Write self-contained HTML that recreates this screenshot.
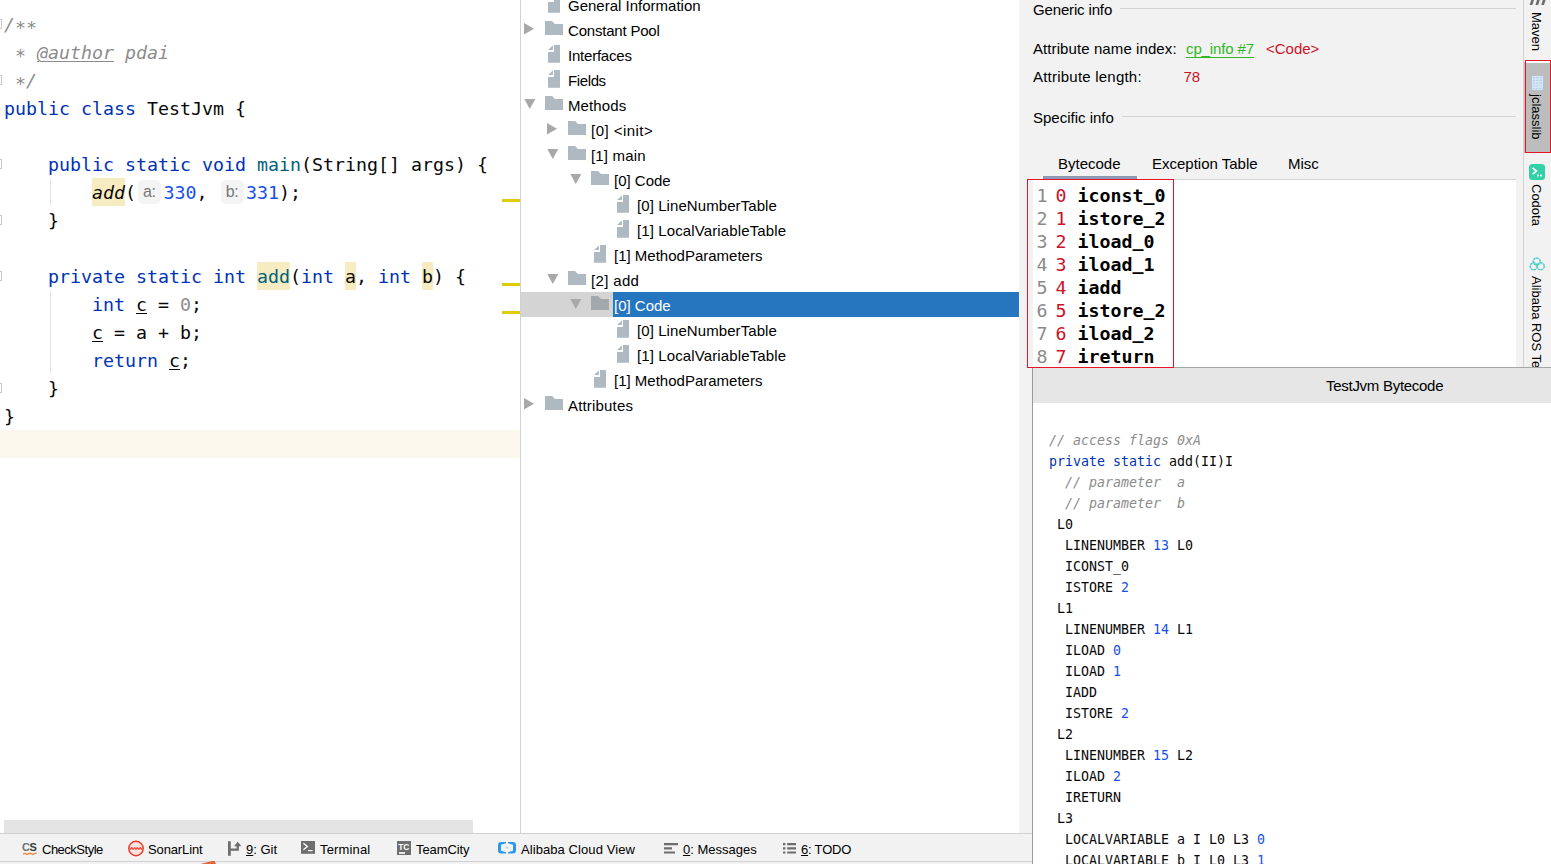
<!DOCTYPE html>
<html><head><meta charset="utf-8"><title>TestJvm</title>
<style>
*{box-sizing:border-box;margin:0;padding:0}
html,body{width:1551px;height:864px;overflow:hidden;background:#fff}
body{position:relative;font-family:"Liberation Sans",sans-serif;color:#000}
.abs{position:absolute}
/* editor */
#ed{position:absolute;left:0;top:0;width:520px;height:834px;background:#fff;overflow:hidden}
.ln{position:absolute;left:0;height:28px;line-height:30px;white-space:pre;font-family:"DejaVu Sans Mono","Liberation Mono",monospace;font-size:18.27px;color:#080808}
.k{color:#0033b3}.c{color:#8c8c8c;font-style:italic}.n{color:#1750eb}.m{color:#00627a}
.hl{background:#f7ebc1;display:inline-block;vertical-align:top;height:28px}
.hint{display:inline-block;vertical-align:top;height:24px;line-height:24px;background:#f4f4f4;border-radius:5px;color:#787878;font-family:"Liberation Sans",sans-serif;font-size:16px;letter-spacing:-0.4px;text-align:center;font-style:normal}
.u{text-decoration:underline;text-decoration-thickness:1px;text-underline-offset:2px}
.ym{position:absolute;left:502px;width:18px;height:3px;background:#e0cc00}
.guide{position:absolute;left:50px;width:1px;background:#e3e3e3}
.fold{position:absolute;left:-8px;width:10px;height:10px;border:1px solid #c9c9c9;background:#fff}
.as{position:relative;top:3px}
/* tree */
#tree{position:absolute;left:520px;top:0;width:499px;height:834px;background:#fff;border-left:1px solid #d1d1d1;overflow:hidden}
.row{position:absolute;left:0;height:25px;line-height:25px;font-size:15px;white-space:pre;width:100%}
.row span{position:absolute;top:1px}
.row svg{position:absolute}
/* right */
#right{position:absolute;left:1020px;top:0;width:504px;box-shadow:-1px 0 0 #f2f2f2;height:864px;background:#f2f2f2}
.t15{position:absolute;font-size:15px;line-height:20px;white-space:pre}
.bc{position:absolute;left:0;height:23px;line-height:23px;font-family:"DejaVu Sans Mono","Liberation Mono",monospace;font-size:18.27px;white-space:pre}
/* popup */
#pop{position:absolute;left:1032px;top:367px;width:519px;height:497px;background:#fff;border-left:1px solid #999;border-top:1px solid #a6a6a6}
.pl{position:absolute;left:0;height:21px;line-height:21px;font-family:"DejaVu Sans Mono","Liberation Mono",monospace;font-size:13.29px;white-space:pre;color:#080808}
/* stripe */
#stripe{position:absolute;left:1523px;top:0;width:28px;height:367px;background:#f2f2f2;border-left:1px solid #d1d1d1}
.vt{position:absolute;writing-mode:vertical-rl;font-size:13px;line-height:16px;white-space:pre}
/* bottom */
#bot{position:absolute;left:0;top:833px;width:1032px;height:31px;background:#f2f2f2;border-top:1px solid #d1d1d1}
.bt{position:absolute;top:7px;font-size:13px;line-height:18px;white-space:pre}
</style></head><body>


<div id="ed">
<div class="ln c" style="top:10px;left:4px">/<span class="as">**</span></div>
<div class="ln c" style="top:38px;left:4px"> <span class="as">*</span> <span class="u">@author</span> pdai</div>
<div class="ln c" style="top:66px;left:4px"> <span class="as">*</span>/</div>
<div class="ln" style="top:94px;left:4px"><span class="k">public class</span> TestJvm {</div>
<div class="ln" style="top:150px;left:48px"><span class="k">public static void</span> <span class="m">main</span>(String[] args) {</div>
<div class="ln" style="top:178px;left:92px"><span class="hl"><i>add</i></span>(<span class="hint" style="width:22.5px;margin:2px 3px 0 2px">a:</span><span class="n">330</span>, <span class="hint" style="width:23px;margin:2px 2.6px 0 2px">b:</span><span class="n">331</span>);</div>
<div class="ln" style="top:206px;left:48px">}</div>
<div class="ln" style="top:262px;left:48px"><span class="k">private static int</span> <span class="m hl">add</span>(<span class="k">int</span> <span class="hl">a</span>, <span class="k">int</span> <span class="hl">b</span>) {</div>
<div class="ln" style="top:290px;left:92px"><span class="k">int</span> <span class="u">c</span> = <span style="color:#8c8c8c">0</span>;</div>
<div class="ln" style="top:318px;left:92px"><span class="u">c</span> = a + b;</div>
<div class="ln" style="top:346px;left:92px"><span class="k">return</span> <span class="u">c</span>;</div>
<div class="ln" style="top:374px;left:48px">}</div>
<div class="ln" style="top:402px;left:4px">}</div>
<div class="abs" style="left:0;top:430px;width:520px;height:28px;background:#fcf8ee"></div>
<div class="guide" style="top:178px;height:28px"></div>
<div class="guide" style="top:290px;height:84px"></div>
<div class="ym" style="top:199px"></div><div class="ym" style="top:283px"></div><div class="ym" style="top:311px"></div>
<div class="fold" style="top:19px"></div><div class="fold" style="top:75px"></div><div class="fold" style="top:159px"></div><div class="fold" style="top:215px"></div><div class="fold" style="top:271px"></div><div class="fold" style="top:383px"></div>
<div class="abs" style="left:4px;top:820px;width:469px;height:13px;background:#e4e4e4"></div>
</div>


<div id="tree">
<div class="row" style="top:-8px"><svg style="left:27px;top:3px" width="12" height="18" viewBox="0 0 12 18"><path d="M6 0H12V17.7H0V7H6Z" fill="#aeb9c2"/><path d="M4.9 0.2V4.9H0.2Z" fill="#aeb9c2"/></svg><span style="left:47px">General Information</span></div>
<div class="row" style="top:17px"><svg style="left:3px;top:6px" width="10" height="12" viewBox="0 0 10 12"><path d="M0 0L10 5.8L0 11.6Z" fill="#a8a8a8"/></svg><svg style="left:24px;top:4px" width="18" height="14" viewBox="0 0 18 14"><path d="M0 0H7L10 3H18V14H0Z" fill="#aeb9c2"/></svg><span style="left:47px;letter-spacing:-0.2px">Constant Pool</span></div>
<div class="row" style="top:42px"><svg style="left:27px;top:3px" width="12" height="18" viewBox="0 0 12 18"><path d="M6 0H12V17.7H0V7H6Z" fill="#aeb9c2"/><path d="M4.9 0.2V4.9H0.2Z" fill="#aeb9c2"/></svg><span style="left:47px;letter-spacing:-0.22px">Interfaces</span></div>
<div class="row" style="top:67px"><svg style="left:27px;top:3px" width="12" height="18" viewBox="0 0 12 18"><path d="M6 0H12V17.7H0V7H6Z" fill="#aeb9c2"/><path d="M4.9 0.2V4.9H0.2Z" fill="#aeb9c2"/></svg><span style="left:47px;letter-spacing:-0.38px">Fields</span></div>
<div class="row" style="top:92px"><svg style="left:3px;top:7px" width="12" height="10" viewBox="0 0 12 10"><path d="M0.3 0H11.3L5.8 10Z" fill="#a8a8a8"/></svg><svg style="left:24px;top:4px" width="18" height="14" viewBox="0 0 18 14"><path d="M0 0H7L10 3H18V14H0Z" fill="#aeb9c2"/></svg><span style="left:47px;letter-spacing:0.1px">Methods</span></div>
<div class="row" style="top:117px"><svg style="left:26px;top:6px" width="10" height="12" viewBox="0 0 10 12"><path d="M0 0L10 5.8L0 11.6Z" fill="#a8a8a8"/></svg><svg style="left:47px;top:4px" width="18" height="14" viewBox="0 0 18 14"><path d="M0 0H7L10 3H18V14H0Z" fill="#aeb9c2"/></svg><span style="left:70px;letter-spacing:0.46px">[0] &lt;init&gt;</span></div>
<div class="row" style="top:142px"><svg style="left:26px;top:7px" width="12" height="10" viewBox="0 0 12 10"><path d="M0.3 0H11.3L5.8 10Z" fill="#a8a8a8"/></svg><svg style="left:47px;top:4px" width="18" height="14" viewBox="0 0 18 14"><path d="M0 0H7L10 3H18V14H0Z" fill="#aeb9c2"/></svg><span style="left:70px;letter-spacing:0.17px">[1] main</span></div>
<div class="row" style="top:167px"><svg style="left:49px;top:7px" width="12" height="10" viewBox="0 0 12 10"><path d="M0.3 0H11.3L5.8 10Z" fill="#a8a8a8"/></svg><svg style="left:70px;top:4px" width="18" height="14" viewBox="0 0 18 14"><path d="M0 0H7L10 3H18V14H0Z" fill="#aeb9c2"/></svg><span style="left:93px">[0] Code</span></div>
<div class="row" style="top:192px"><svg style="left:96px;top:3px" width="12" height="18" viewBox="0 0 12 18"><path d="M6 0H12V17.7H0V7H6Z" fill="#aeb9c2"/><path d="M4.9 0.2V4.9H0.2Z" fill="#aeb9c2"/></svg><span style="left:116px;letter-spacing:0.08px">[0] LineNumberTable</span></div>
<div class="row" style="top:217px"><svg style="left:96px;top:3px" width="12" height="18" viewBox="0 0 12 18"><path d="M6 0H12V17.7H0V7H6Z" fill="#aeb9c2"/><path d="M4.9 0.2V4.9H0.2Z" fill="#aeb9c2"/></svg><span style="left:116px;letter-spacing:0.12px">[1] LocalVariableTable</span></div>
<div class="row" style="top:242px"><svg style="left:73px;top:3px" width="12" height="18" viewBox="0 0 12 18"><path d="M6 0H12V17.7H0V7H6Z" fill="#aeb9c2"/><path d="M4.9 0.2V4.9H0.2Z" fill="#aeb9c2"/></svg><span style="left:93px">[1] MethodParameters</span></div>
<div class="row" style="top:267px"><svg style="left:26px;top:7px" width="12" height="10" viewBox="0 0 12 10"><path d="M0.3 0H11.3L5.8 10Z" fill="#a8a8a8"/></svg><svg style="left:47px;top:4px" width="18" height="14" viewBox="0 0 18 14"><path d="M0 0H7L10 3H18V14H0Z" fill="#aeb9c2"/></svg><span style="left:70px;letter-spacing:0.34px">[2] add</span></div>
<div class="row" style="top:292px"><div class="abs" style="left:0;top:0;width:92px;height:25px;background:#d4d4d4"></div><div class="abs" style="left:92px;top:0;width:406px;height:25px;background:#2675bf"></div><svg style="left:49px;top:7px" width="12" height="10" viewBox="0 0 12 10"><path d="M0.3 0H11.3L5.8 10Z" fill="#a8a8a8"/></svg><svg style="left:70px;top:4px" width="18" height="14" viewBox="0 0 18 14"><path d="M0 0H7L10 3H18V14H0Z" fill="#a3a8ac"/></svg><span style="left:93px;color:#fff">[0] Code</span></div>
<div class="row" style="top:317px"><svg style="left:96px;top:3px" width="12" height="18" viewBox="0 0 12 18"><path d="M6 0H12V17.7H0V7H6Z" fill="#aeb9c2"/><path d="M4.9 0.2V4.9H0.2Z" fill="#aeb9c2"/></svg><span style="left:116px;letter-spacing:0.08px">[0] LineNumberTable</span></div>
<div class="row" style="top:342px"><svg style="left:96px;top:3px" width="12" height="18" viewBox="0 0 12 18"><path d="M6 0H12V17.7H0V7H6Z" fill="#aeb9c2"/><path d="M4.9 0.2V4.9H0.2Z" fill="#aeb9c2"/></svg><span style="left:116px;letter-spacing:0.12px">[1] LocalVariableTable</span></div>
<div class="row" style="top:367px"><svg style="left:73px;top:3px" width="12" height="18" viewBox="0 0 12 18"><path d="M6 0H12V17.7H0V7H6Z" fill="#aeb9c2"/><path d="M4.9 0.2V4.9H0.2Z" fill="#aeb9c2"/></svg><span style="left:93px">[1] MethodParameters</span></div>
<div class="row" style="top:392px"><svg style="left:3px;top:6px" width="10" height="12" viewBox="0 0 10 12"><path d="M0 0L10 5.8L0 11.6Z" fill="#a8a8a8"/></svg><svg style="left:24px;top:4px" width="18" height="14" viewBox="0 0 18 14"><path d="M0 0H7L10 3H18V14H0Z" fill="#aeb9c2"/></svg><span style="left:47px;letter-spacing:0.17px">Attributes</span></div>
</div>
<div id="right">
<div class="t15" style="left:13px;top:0;letter-spacing:-0.15px">Generic info</div>
<div class="abs" style="left:100px;top:8px;width:396px;height:1px;background:#d4d4d4"></div>
<div class="t15" style="left:13px;top:39px;letter-spacing:0.09px">Attribute name index:</div>
<div class="t15" style="left:166px;top:39px;color:#2fb824;text-decoration:underline;text-underline-offset:2.5px;text-decoration-skip-ink:none;text-decoration-thickness:1px;letter-spacing:-0.12px">cp_info #7</div>
<div class="t15" style="left:246px;top:39px;color:#cc1128">&lt;Code&gt;</div>
<div class="t15" style="left:13px;top:67px;letter-spacing:0.22px">Attribute length:</div>
<div class="t15" style="left:163.5px;top:67px;color:#cc1128">78</div>
<div class="t15" style="left:13px;top:108px">Specific info</div>
<div class="abs" style="left:102px;top:116px;width:394px;height:1px;background:#d4d4d4"></div>
<div class="t15" style="left:38px;top:154px">Bytecode</div>
<div class="t15" style="left:132px;top:154px">Exception Table</div>
<div class="t15" style="left:268px;top:154px">Misc</div>
<div class="abs" style="left:23px;top:176px;width:94px;height:3px;background:#8d9bb5"></div>
<div class="abs" style="left:13px;top:179px;width:483px;height:1px;background:#d4d4d4"></div>
<div id="list" class="abs" style="left:13px;top:180px;width:483px;height:187px;background:#fff;overflow:hidden">
<div class="bc" style="top:4px;left:3.5px;color:#8a8a8a">1</div><div class="bc" style="top:4px;left:22.5px;color:#cc1128">0</div><div class="bc" style="top:4px;left:44.5px;font-weight:bold;color:#000">iconst<span style="position:relative;top:-1.5px">_</span>0</div>
<div class="bc" style="top:27px;left:3.5px;color:#8a8a8a">2</div><div class="bc" style="top:27px;left:22.5px;color:#cc1128">1</div><div class="bc" style="top:27px;left:44.5px;font-weight:bold;color:#000">istore<span style="position:relative;top:-1.5px">_</span>2</div>
<div class="bc" style="top:50px;left:3.5px;color:#8a8a8a">3</div><div class="bc" style="top:50px;left:22.5px;color:#cc1128">2</div><div class="bc" style="top:50px;left:44.5px;font-weight:bold;color:#000">iload<span style="position:relative;top:-1.5px">_</span>0</div>
<div class="bc" style="top:73px;left:3.5px;color:#8a8a8a">4</div><div class="bc" style="top:73px;left:22.5px;color:#cc1128">3</div><div class="bc" style="top:73px;left:44.5px;font-weight:bold;color:#000">iload<span style="position:relative;top:-1.5px">_</span>1</div>
<div class="bc" style="top:96px;left:3.5px;color:#8a8a8a">5</div><div class="bc" style="top:96px;left:22.5px;color:#cc1128">4</div><div class="bc" style="top:96px;left:44.5px;font-weight:bold;color:#000">iadd</div>
<div class="bc" style="top:119px;left:3.5px;color:#8a8a8a">6</div><div class="bc" style="top:119px;left:22.5px;color:#cc1128">5</div><div class="bc" style="top:119px;left:44.5px;font-weight:bold;color:#000">istore<span style="position:relative;top:-1.5px">_</span>2</div>
<div class="bc" style="top:142px;left:3.5px;color:#8a8a8a">7</div><div class="bc" style="top:142px;left:22.5px;color:#cc1128">6</div><div class="bc" style="top:142px;left:44.5px;font-weight:bold;color:#000">iload<span style="position:relative;top:-1.5px">_</span>2</div>
<div class="bc" style="top:165px;left:3.5px;color:#8a8a8a">8</div><div class="bc" style="top:165px;left:22.5px;color:#cc1128">7</div><div class="bc" style="top:165px;left:44.5px;font-weight:bold;color:#000">ireturn</div>
</div>
</div>

<div id="stripe">
<svg class="abs" style="left:5px;top:0" width="18" height="6" viewBox="0 0 18 6"><path d="M2.2 0H5L3.4 4.9H0.6ZM8 0H10.8L9.2 4.9H6.4ZM13.8 0H16.6L15 4.9H12.2Z" fill="#6e6e6e"/></svg>
<div class="vt" style="left:4px;top:12px">Maven</div>
<div class="abs" style="left:0;top:62px;width:27px;height:91px;background:#bdbdbd"></div>
<div class="abs" style="left:2px;top:61px;width:24px;height:2px;background:#fff"></div>
<div class="abs" style="left:1px;top:60px;width:26px;height:93px;border:1px solid #e8142a"></div>
<svg class="abs" style="left:8px;top:76px" width="11" height="14" viewBox="0 0 11 14"><rect width="11" height="14.4" fill="#d3e6f9"/><path d="M1 1.6H3M4.2 1.6H6.4M7.6 1.6H10M1 4.4H3M4.2 4.4H6.4M7.6 4.4H10M1 7.2H3M4.2 7.2H6.4M7.6 7.2H10M1 10H3M4.2 10H6.4M7.6 10H10M1 12.6H3M4.2 12.6H6.4M7.6 12.6H10" stroke="#b4d0ee" stroke-width="1.2"/></svg>
<div class="vt" style="left:4px;top:93.5px">jclasslib</div>
<svg class="abs" style="left:5px;top:164px" width="16" height="16" viewBox="0 0 16 16"><rect width="16" height="16" rx="3.5" fill="#34d0a8"/><path d="M3.6 3.8L7.4 7L3.6 10.2" stroke="#fff" stroke-width="1.7" fill="none"/><rect x="8" y="10.6" width="1.8" height="1.8" fill="#fff"/><rect x="11" y="10.6" width="1.8" height="1.8" fill="#fff"/></svg>
<div class="vt" style="left:4px;top:184px">Codota</div>
<svg class="abs" style="left:5px;top:257px" width="16" height="14" viewBox="0 0 16 14"><g fill="none" stroke-width="1.3" stroke="#93d2f7"><circle cx="7.7" cy="4.5" r="3.5"/><circle cx="4.7" cy="9.3" r="3.5"/><circle cx="11.7" cy="9.3" r="3.5"/></g><g fill="none" stroke-width="1.1" stroke="#2ed39e" stroke-dasharray="1.6 1.6"><circle cx="7.7" cy="4.5" r="3.5"/><circle cx="4.7" cy="9.3" r="3.5"/><circle cx="11.7" cy="9.3" r="3.5"/></g></svg>
<div class="vt" style="left:4px;top:276px">Alibaba ROS Templates</div>
</div>

<div id="pop">
<div class="abs" style="left:0;top:0;width:518px;height:35px;background:#e6e6e6"></div>
<div class="t15" style="left:293px;top:8px;letter-spacing:-0.28px">TestJvm Bytecode</div>
<div class="pl" style="top:62px;left:16px"><span class="c">// access flags 0xA</span></div>
<div class="pl" style="top:83px;left:16px"><span class="k">private static</span> add(II)I</div>
<div class="pl" style="top:104px;left:32px"><span class="c">// parameter  a</span></div>
<div class="pl" style="top:125px;left:32px"><span class="c">// parameter  b</span></div>
<div class="pl" style="top:146px;left:24px">L0</div>
<div class="pl" style="top:167px;left:32px">LINENUMBER <span class="n">13</span> L0</div>
<div class="pl" style="top:188px;left:32px">ICONST_0</div>
<div class="pl" style="top:209px;left:32px">ISTORE <span class="n">2</span></div>
<div class="pl" style="top:230px;left:24px">L1</div>
<div class="pl" style="top:251px;left:32px">LINENUMBER <span class="n">14</span> L1</div>
<div class="pl" style="top:272px;left:32px">ILOAD <span class="n">0</span></div>
<div class="pl" style="top:293px;left:32px">ILOAD <span class="n">1</span></div>
<div class="pl" style="top:314px;left:32px">IADD</div>
<div class="pl" style="top:335px;left:32px">ISTORE <span class="n">2</span></div>
<div class="pl" style="top:356px;left:24px">L2</div>
<div class="pl" style="top:377px;left:32px">LINENUMBER <span class="n">15</span> L2</div>
<div class="pl" style="top:398px;left:32px">ILOAD <span class="n">2</span></div>
<div class="pl" style="top:419px;left:32px">IRETURN</div>
<div class="pl" style="top:440px;left:24px">L3</div>
<div class="pl" style="top:461px;left:32px">LOCALVARIABLE a I L0 L3 <span class="n">0</span></div>
<div class="pl" style="top:482px;left:32px">LOCALVARIABLE b I L0 L3 <span class="n">1</span></div>
</div>
<div id="bot">
<div class="abs" style="left:0;top:27px;width:1032px;height:1px;background:#d1d1d1"></div>
<div class="abs" style="left:22px;top:8px;font:bold 11px/11px 'Liberation Sans',sans-serif;letter-spacing:-0.4px;color:#737373">C<span style="color:#3c3c3c">S</span></div>
<svg class="abs" style="left:23px;top:18px" width="14" height="4" viewBox="0 0 14 4"><path d="M0.2 2.4C1 1.2 1.9 1 2.8 1.7 3.8 2.5 4.7 2.6 5.6 1.8 6.5 1 7.4 1 8.4 1.8 9.3 2.6 10.2 2.5 11.2 1.7 12.1 1 13 1 13.8 1.6" stroke="#f0823c" stroke-width="1.3" fill="none"/></svg>
<div class="bt" style="left:42px;letter-spacing:-0.5px">CheckStyle</div>
<svg class="abs" style="left:127px;top:6px" width="18" height="18" viewBox="0 0 18 18"><circle cx="9" cy="8.5" r="7.2" fill="#fbe3e0" stroke="#e8392b" stroke-width="1.4"/><path d="M2.60 8.50 L2.81 8.84 L3.03 9.11 L3.24 9.24 L3.45 9.21 L3.67 9.03 L3.88 8.73 L4.09 8.38 L4.31 8.06 L4.52 7.83 L4.73 7.75 L4.95 7.83 L5.16 8.06 L5.37 8.38 L5.59 8.73 L5.80 9.03 L6.01 9.21 L6.23 9.24 L6.44 9.11 L6.65 8.84 L6.87 8.50 L7.08 8.16 L7.29 7.89 L7.51 7.76 L7.72 7.79 L7.93 7.97 L8.15 8.27 L8.36 8.62 L8.57 8.94 L8.79 9.17 L9.00 9.25 L9.21 9.17 L9.43 8.94 L9.64 8.62 L9.85 8.27 L10.07 7.97 L10.28 7.79 L10.49 7.76 L10.71 7.89 L10.92 8.16 L11.13 8.50 L11.35 8.84 L11.56 9.11 L11.77 9.24 L11.99 9.21 L12.20 9.03 L12.41 8.73 L12.63 8.38 L12.84 8.06 L13.05 7.83 L13.27 7.75 L13.48 7.83 L13.69 8.06 L13.91 8.38 L14.12 8.73 L14.33 9.03 L14.55 9.21 L14.76 9.24 L14.97 9.11 L15.19 8.84 L15.40 8.50" stroke="#e8392b" stroke-width="1.2" fill="none"/></svg>
<div class="bt" style="left:148px;letter-spacing:-0.13px">SonarLint</div>
<svg class="abs" style="left:228px;top:7px" width="14" height="15" viewBox="0 0 14 15"><path d="M0 0.3H2.8V14.8H0Z M2.8 7.6H8.6V5.2H6L9.7 0.8L13.4 5.2H10.9V9.8H2.8Z" fill="#6e6e6e"/></svg>
<div class="bt" style="left:246px"><u>9</u>: Git</div>
<svg class="abs" style="left:301px;top:7px" width="14" height="13" viewBox="0 0 14 13"><rect width="14" height="12.8" fill="#6e6e6e"/><path d="M2.4 2.2L6.4 5.5L2.4 8.8" stroke="#fff" stroke-width="1.3" fill="none"/><rect x="7" y="9" width="4.6" height="1.2" fill="#fff"/></svg>
<div class="bt" style="left:320px;letter-spacing:0.15px">Terminal</div>
<div class="abs" style="left:397px;top:7px;width:14px;height:14px;background:#6e6e6e"></div>
<div class="abs" style="left:398.2px;top:9px;font:bold 8.4px/9px 'Liberation Sans',sans-serif;letter-spacing:0;color:#fff">TC</div>
<div class="abs" style="left:398.5px;top:18.2px;width:6.5px;height:1.4px;background:#e8e8e8"></div>
<div class="bt" style="left:416px;letter-spacing:-0.1px">TeamCity</div>
<svg class="abs" style="left:498px;top:8.3px" width="18" height="12" viewBox="0 0 18 12"><path d="M8 0H3.2Q0 0 0 3.2V8.3Q0 11.5 3.2 11.5H8V10.3L3 8.8V2.7L8 1.2Z M10 0H14.8Q18 0 18 3.2V8.3Q18 11.5 14.8 11.5H10V10.3L15 8.8V2.7L10 1.2Z" fill="#2b98ea"/><ellipse cx="9" cy="5.75" rx="1.4" ry="0.8" fill="#9ccdf6"/></svg>
<div class="bt" style="left:521px;letter-spacing:0.08px">Alibaba Cloud View</div>
<svg class="abs" style="left:664px;top:9px" width="14" height="11" viewBox="0 0 14 11"><path d="M0 0H14V2.2H0Z M0 4.2H8V6.4H0Z M0 8.4H11V10.6H0Z" fill="#6e6e6e"/></svg>
<div class="bt" style="left:683px"><u>0</u>: Messages</div>
<svg class="abs" style="left:783px;top:9px" width="13" height="11" viewBox="0 0 13 11"><path d="M0 0H2.4V2.2H0Z M0 4.2H2.4V6.4H0Z M0 8.4H2.4V10.6H0Z M4.2 0H13V2.2H4.2Z M4.2 4.2H13V6.4H4.2Z M4.2 8.4H13V10.6H4.2Z" fill="#6e6e6e"/></svg>
<div class="bt" style="left:801px;letter-spacing:-0.2px"><u>6</u>: TODO</div>
<svg class="abs" style="left:200px;top:27px" width="17" height="3" viewBox="0 0 17 3"><path d="M0.5 3L12 0L14.6 0L16 3Z" fill="#e8643c"/></svg>
</div>
<div class="abs" style="left:1027px;top:179px;width:147px;height:189px;border:1px solid #e8142a"></div>

</body></html>
